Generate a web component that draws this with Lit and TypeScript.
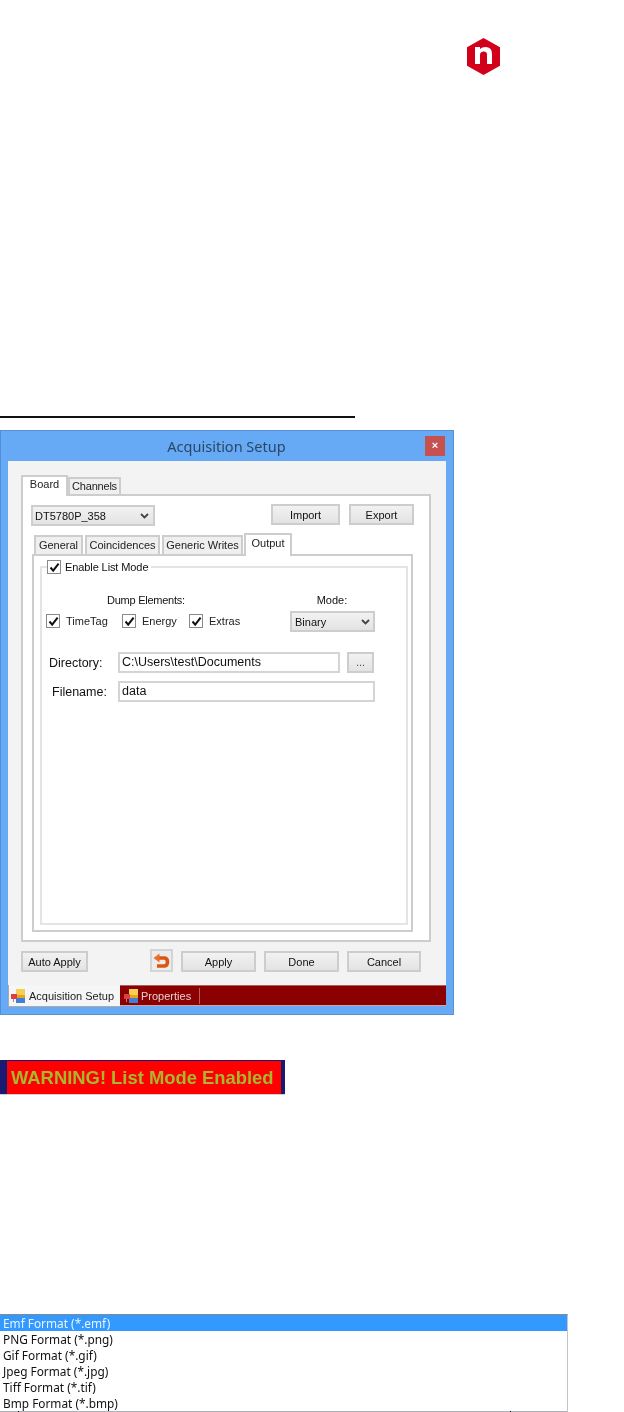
import { LitElement, html, css, svg } from "lit";
import { customElement } from "lit/decorators.js";

const check = html`<span class="check"><svg width="11" height="11" viewBox="0 0 11 11"><path d="M1.5 5.5 L4.2 8.6 L9.6 1.6" fill="none" stroke="#111" stroke-width="2"/></svg></span>`;
const chevron = html`<svg class="chev" width="9" height="6" viewBox="0 0 9 6"><path d="M1 1 L4.5 4.5 L8 1" fill="none" stroke="#444" stroke-width="1.8"/></svg>`;
const flag = svg`<svg class="flag" width="14" height="14" viewBox="0 0 14 14">
  <rect x="5" y="0" width="9" height="6" fill="#f6cf55"/><rect x="5" y="6" width="9" height="3" fill="#f0a020"/>
  <rect x="5" y="9" width="9" height="5" fill="#3f80d8"/><rect x="0" y="5" width="6" height="5" fill="#dc4040"/>
  <rect x="2" y="10" width="1" height="3" fill="#c08080"/></svg>`;

@customElement("app-root")
export class AppRoot extends LitElement {
  static styles = css`
    :host { display: block; width: 624px; height: 1412px; background: #fff; overflow: hidden;
      font-family: "Liberation Sans", Arial, sans-serif; font-size: 11px; color: #111; }
    .page { display: flex; flex-direction: column; }
    .logo { margin: 38px 0 0 467px; width: 33px; height: 37px; display: block; filter: blur(0.3px); }
    .rule { margin-top: 341px; width: 355px; height: 2px; background: #111; }
    .window { margin-top: 12px; width: 454px; height: 585px; box-sizing: border-box; background: #66a9f5;
      border: 1px solid #5a93d4; border-left-color: #4f8fd8; padding: 0 7px 8px; display: flex; flex-direction: column; }
    .blur { filter: blur(0.45px); }
    .titlebar { height: 30px; flex: none; display: flex; align-items: flex-start; justify-content: space-between; }
    .title { flex: 1; text-align: center; font: 14.5px/30px "Noto Sans", "Open Sans", sans-serif; color: #2b4766; padding-left: 20px; }
    .close { margin: 5px 1px 0 0; width: 20px; height: 20px; background: #c75050; color: #fff; font: bold 11px/19px "Liberation Sans", sans-serif; text-align: center; }
    .client { flex: 1; background: #f3f3f3; display: flex; flex-direction: column; padding: 14px 15px 0 13px; min-height: 0; }
    .tabs { display: flex; align-items: flex-end; position: relative; z-index: 1; }
    .tab { box-sizing: border-box; height: 17px; border: 2px solid #cdcdcd; border-bottom: none; background: #efefef; line-height: 14px; text-align: center; color: #222; }
    .tab.board { width: 47px; height: 21px; margin-bottom: -2px; background: #fff; line-height: 15px; }
    .tab.channels { width: 53px; letter-spacing: -0.2px; }
    .frame { box-sizing: border-box; border: 2px solid #cdcdcd; background: #fff; width: 410px; height: 448px; display: flex; flex-direction: column; padding: 8px 0 0 8px; }
    .toprow { display: flex; align-items: flex-start; }
    .combo { box-sizing: border-box; border: 2px solid #cdcdcd; background: linear-gradient(#f2f2f2, #e3e3e3); height: 21px; display: flex; align-items: center; justify-content: space-between; padding: 0 4px 0 2px; font-size: 11px; color: #111; }
    .combo.board { width: 124px; margin-top: 1px; }
    .btn { box-sizing: border-box; border: 2px solid #cdcdcd; background: linear-gradient(#f2f2f2, #e3e3e3); height: 21px; line-height: 18px; text-align: center; color: #111; }
    .import { width: 69px; margin-left: 116px; }
    .export { width: 65px; margin-left: 9px; }
    .innertabs { display: flex; align-items: flex-end; margin: 7px 0 0 3px; position: relative; z-index: 1; height: 21px; }
    .itab { box-sizing: border-box; height: 19px; border: 2px solid #cdcdcd; border-bottom: none; background: #efefef; line-height: 16px; text-align: center; color: #222; margin-right: 2px; }
    .itab.general { width: 49px; }
    .itab.coin { width: 75px; }
    .itab.gen { width: 81px; margin-right: 1px; }
    .itab.out { width: 48px; height: 23px; background: #fff; margin-bottom: -2px; margin-right: 0; }
    .inner { box-sizing: border-box; border: 2px solid #cdcdcd; width: 381px; height: 378px; margin-left: 1px; background: #fff; padding: 10px 3px 5px 6px; display: flex; }
    .group { box-sizing: border-box; flex: 1; border: 2px solid #e4e4e4; height: 359px; position: relative; padding: 0 0 0 4px; display: flex; flex-direction: column; }
    .legend { position: absolute; top: -8px; left: 5px; background: #fff; display: flex; align-items: center; gap: 4px; padding-right: 3px; height: 14px; font-size: 11px; letter-spacing: -0.1px; }
    .check { box-sizing: border-box; width: 14px; height: 14px; border: 1.5px solid #8a8a8a; background: #fff; display: inline-flex; align-items: center; justify-content: center; flex: none; }
    .dumprow { display: flex; margin-top: 22px; height: 42px; }
    .dump { width: 244px; display: flex; flex-direction: column; }
    .dumplabel { height: 19px; line-height: 20px; font-size: 11px; padding-left: 61px; letter-spacing: -0.25px; }
    .checks { display: flex; align-items: center; margin-top: 5px; }
    .cb { display: flex; align-items: center; gap: 6px; font-size: 11px; color: #222; }
    .cb.t { width: 76px; }
    .cb.e { width: 67px; }
    .mode { display: flex; flex-direction: column; width: 85px; }
    .modelabel { text-align: center; height: 21px; line-height: 20px; font-size: 11px; margin-right: 1px; }
    .combo.modec { width: 85px; padding-left: 3px; padding-right: 3px; }
    .field { display: flex; align-items: center; font-size: 12.5px; color: #111; }
    .field .lab { width: 72px; box-sizing: border-box; }
    .input { box-sizing: border-box; height: 21px; border: 2px solid #d4d4d4; background: #fff; line-height: 17px; padding-left: 2px; font-size: 12.5px; }
    .dir { margin-top: 20px; }
    .dir .lab { padding-left: 3px; }
    .dir .input { width: 222px; }
    .dots { width: 27px; margin-left: 7px; color: #555; line-height: 16px; font-size: 11px; }
    .fil { margin-top: 8px; }
    .fil .lab { padding-left: 6px; }
    .fil .input { width: 257px; }
    .actions { display: flex; align-items: flex-end; margin-top: 7px; height: 23px; }
    .btn.auto { width: 67px; }
    .undo { box-sizing: border-box; width: 23px; height: 23px; margin-left: 62px; border: 2px solid #d4d4d4; background: #ececec; display: flex; align-items: center; justify-content: center; }
    .btn.a { width: 75px; margin-left: 8px; }
    .btn.d { width: 75px; margin-left: 8px; }
    .btn.c { width: 74px; margin-left: 8px; }
    .strip { margin: 13px -15px 0 -13px; height: 21px; background: #8b0000; border-top: 1px solid #a86060; border-bottom: 1px solid #d8a0a0; box-sizing: border-box; display: flex; }
    .stab { display: flex; align-items: center; box-sizing: border-box; font-size: 11px; }
    .stab.on { width: 112px; background: #f6f6f6; padding-left: 2px; gap: 4px; color: #222; border-left: 1px solid #aaa; border-bottom: 1px solid #aaa; margin-top: -1px; height: 22px; }
    .stab.off { width: 80px; color: #e8d0d0; padding-left: 4px; gap: 3px; border-right: 1px solid #b06060; height: 16px; margin-top: 2px; }
    .warning { margin-top: 45px; width: 285px; height: 35px; display: flex; flex-direction: column; }
    .wtop { height: 1px; display: flex; }
    .wt { background: #7a1020; width: 5px; }
    .wt.first { margin-left: 22px; }
    .wt.second { margin-left: 118px; }
    .wt.rest { flex: 1; background: #10102a; }
    .wbody { flex: 1; background: #1a1a70; padding: 1px 4px 0 7px; display: flex; border-bottom: 1px solid #d0d0d8; }
    .warnin { flex: 1; background: #f00; color: #a8b82c; font: bold 18.4px/33px "Liberation Sans", sans-serif; padding-left: 4px; white-space: nowrap; }
    .list { margin-top: 219px; width: 568px; height: 98px; box-sizing: border-box; border-top: 1px solid #888; border-right: 1.5px solid #c4c4cc; background: #fff; font: 11.85px/16px "Noto Sans", sans-serif; color: #111; display: flex; flex-direction: column; }
    .row { height: 16px; padding-left: 3px; white-space: nowrap; flex: none; }
    .row.sel { background: #3399ff; color: #e8f4ff; }
    .foot { height: 1px; background: #b0b0b8; display: flex; }
    .foot i { width: 1px; background: #111; }
    .foot i.a { margin-left: 18px; }
    .foot i.b { margin-left: 491px; }
  `;

  render() {
    const formats = ["PNG Format (*.png)", "Gif Format (*.gif)", "Jpeg Format (*.jpg)", "Tiff Format (*.tif)", "Bmp Format (*.bmp)"];
    return html`<div class="page">
      <svg class="logo" viewBox="0 0 33 37">
        <path d="M16.5 0 L33 9.2 V27.8 L16.5 37 L0 27.8 V9.2 Z" fill="#d2001a"/>
        <path d="M8 9 H13 V11 Q15 9 18.5 9 Q25 9 25 16 V26 H20 V16.5 Q20 13.5 16.7 13.5 Q13 13.5 13 17 V26 H8 Z" fill="#fff"/>
      </svg>
      <div class="rule"></div>
      <div class="window blur">
        <div class="titlebar"><div class="title">Acquisition Setup</div><div class="close">×</div></div>
        <div class="client">
          <div class="tabs">
            <div class="tab board">Board</div>
            <div class="tab channels">Channels</div>
          </div>
          <div class="frame">
            <div class="toprow">
              <div class="combo board">DT5780P_358 ${chevron}</div>
              <div class="btn import">Import</div>
              <div class="btn export">Export</div>
            </div>
            <div class="innertabs">
              <div class="itab general">General</div>
              <div class="itab coin">Coincidences</div>
              <div class="itab gen">Generic Writes</div>
              <div class="itab out">Output</div>
            </div>
            <div class="inner">
              <div class="group">
                <div class="legend">${check}<span>Enable List Mode</span></div>
                <div class="dumprow">
                  <div class="dump">
                    <div class="dumplabel">Dump Elements:</div>
                    <div class="checks">
                      <div class="cb t">${check}TimeTag</div>
                      <div class="cb e">${check}Energy</div>
                      <div class="cb">${check}Extras</div>
                    </div>
                  </div>
                  <div class="mode">
                    <div class="modelabel">Mode:</div>
                    <div class="combo modec">Binary ${chevron}</div>
                  </div>
                </div>
                <div class="field dir"><span class="lab">Directory:</span><div class="input">C:\\Users\\test\\Documents</div><div class="btn dots">...</div></div>
                <div class="field fil"><span class="lab">Filename:</span><div class="input">data</div></div>
              </div>
            </div>
          </div>
          <div class="actions">
            <div class="btn auto">Auto Apply</div>
            <div class="undo"><svg width="17" height="16" viewBox="0 0 17 16"><path d="M5 5 H11 Q14.5 5 14.5 9 Q14.5 13 11 13 H4" fill="none" stroke="#dd5510" stroke-width="3.6"/><path d="M6.5 0.5 V9.5 L0.5 5 Z" fill="#e8702a"/></svg></div>
            <div class="btn a">Apply</div>
            <div class="btn d">Done</div>
            <div class="btn c">Cancel</div>
          </div>
          <div class="strip">
            <div class="stab on">${flag}<span>Acquisition Setup</span></div>
            <div class="stab off">${flag}<span>Properties</span></div>
          </div>
        </div>
      </div>
      <div class="warning blur">
        <div class="wtop"><div class="wt first"></div><div class="wt second"></div><div class="wt rest"></div></div>
        <div class="wbody"><div class="warnin">WARNING! List Mode Enabled</div></div>
      </div>
      <div class="list blur">
        <div class="row sel">Emf Format (*.emf)</div>
        ${formats.map((f) => html`<div class="row">${f}</div>`)}
        <div class="foot"><i class="a"></i><i class="b"></i></div>
      </div>
    </div>`;
  }
}
